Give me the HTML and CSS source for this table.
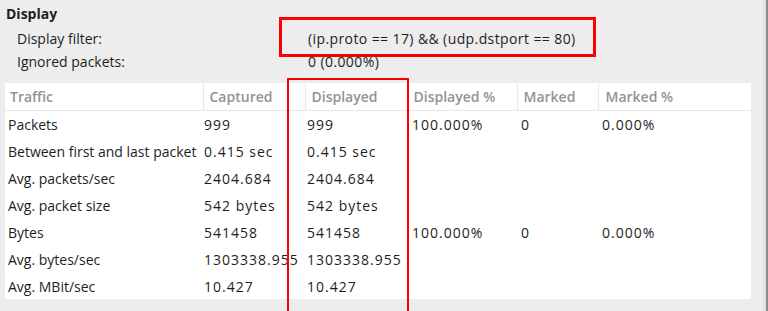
FILE: index.html
```html
<!DOCTYPE html>
<html>
<head>
<meta charset="utf-8">
<link rel="stylesheet" href="styles.css">
</head>
<body>
<div class="window">
  <div class="content">
    <div class="section-title">Display</div>
    <div class="info">
      <div class="info-row"><span class="info-label">Display filter:</span><span class="info-value">(ip.proto == 17) &amp;&amp; (udp.dstport == 80)</span></div>
      <div class="info-row"><span class="info-label">Ignored packets:</span><span class="info-value">0 (0.000%)</span></div>
    </div>
    <table class="traffic">
      <colgroup>
        <col class="c1"><col class="c2"><col class="c3"><col class="c4"><col class="c5"><col class="c6">
      </colgroup>
      <thead>
        <tr><th>Traffic</th><th>Captured</th><th>Displayed</th><th>Displayed %</th><th>Marked</th><th>Marked %</th></tr>
      </thead>
      <tbody>
        <tr><td>Packets</td><td class="num">999</td><td class="num">999</td><td class="num">100.000%</td><td class="num">0</td><td class="num">0.000%</td></tr>
        <tr><td>Between first and last packet</td><td class="num">0.415 sec</td><td class="num">0.415 sec</td><td></td><td></td><td></td></tr>
        <tr><td>Avg. packets/sec</td><td class="num">2404.684</td><td class="num">2404.684</td><td></td><td></td><td></td></tr>
        <tr><td>Avg. packet size</td><td class="num">542 bytes</td><td class="num">542 bytes</td><td></td><td></td><td></td></tr>
        <tr><td>Bytes</td><td class="num">541458</td><td class="num">541458</td><td class="num">100.000%</td><td class="num">0</td><td class="num">0.000%</td></tr>
        <tr><td>Avg. bytes/sec</td><td class="num">1303338.955</td><td class="num">1303338.955</td><td></td><td></td><td></td></tr>
        <tr><td>Avg. MBit/sec</td><td class="num">10.427</td><td class="num">10.427</td><td></td><td></td><td></td></tr>
      </tbody>
    </table>
  </div>
  <div class="edge"></div>
</div>
<div class="mark mark-filter"></div>
<div class="mark mark-column"></div>
</body>
</html>
```

FILE: styles.css
```css
html, body {
  margin: 0;
  padding: 0;
  width: 768px;
  height: 311px;
  overflow: hidden;
  background: #ededed;
}
body {
  position: relative;
  font-family: "Open Sans", "DejaVu Sans", sans-serif;
  font-size: 14px;
  color: #1e1e1e;
}
.window {
  display: flex;
  height: 311px;
}
.content {
  flex: 1;
  padding-left: 5px;
}
.edge {
  width: 3px;
  background: #e0e0e0;
  border-right: 2px solid #8c8c8c;
}
.section-title {
  font-weight: 700;
  line-height: 20px;
  margin-top: 4px;
  padding-left: 1px;
}
.info {
  padding-top: 3px;
}
.info-row {
  display: flex;
  line-height: 23px;
}
.info-label {
  width: 291px;
  padding-left: 12px;
}
.info-value {
  white-space: nowrap;
  letter-spacing: 0.4px;
}
.traffic {
  margin-top: 10px;
  width: 746px;
  table-layout: fixed;
  border-collapse: collapse;
  background: #ffffff;
}
.c1 { width: 198px; }
.c2 { width: 102px; }
.c3 { width: 103px; }
.c4 { width: 109px; }
.c5 { width: 81px; }
.c6 { width: 153px; }
.traffic th {
  height: 27px;
  padding: 0 0 0 6px;
  text-align: left;
  font-weight: 600;
  color: #939393;
  border-bottom: 1px solid #e8e8e8;
  border-right: 1px solid #e8e8e8;
  white-space: nowrap;
  box-sizing: border-box;
}
.traffic th:first-child { padding-left: 5px; }
.traffic th:nth-child(4) { padding-left: 5px; }
.traffic th:nth-child(6) { padding-left: 7px; border-right: none; }
.traffic td {
  height: 27px;
  padding: 2px 0 0 3px;
  white-space: nowrap;
  overflow: visible;
  box-sizing: border-box;
}
.traffic td:nth-child(2) { padding-left: 1px; }
.traffic td:nth-child(3) { padding-left: 2px; }
.traffic td:nth-child(4),
.traffic td:nth-child(5),
.traffic td:nth-child(6) { padding-left: 4px; }
.traffic td.num {
  letter-spacing: 1px;
}
.mark {
  position: absolute;
  border-style: solid;
  border-color: #ff0000;
  box-sizing: border-box;
}
.mark-filter {
  left: 279px;
  top: 17px;
  width: 317px;
  height: 40px;
  border-width: 3px;
}
.mark-column {
  left: 287px;
  top: 78px;
  width: 122px;
  height: 233px;
  border-width: 2px 2px 0 2px;
}
```
